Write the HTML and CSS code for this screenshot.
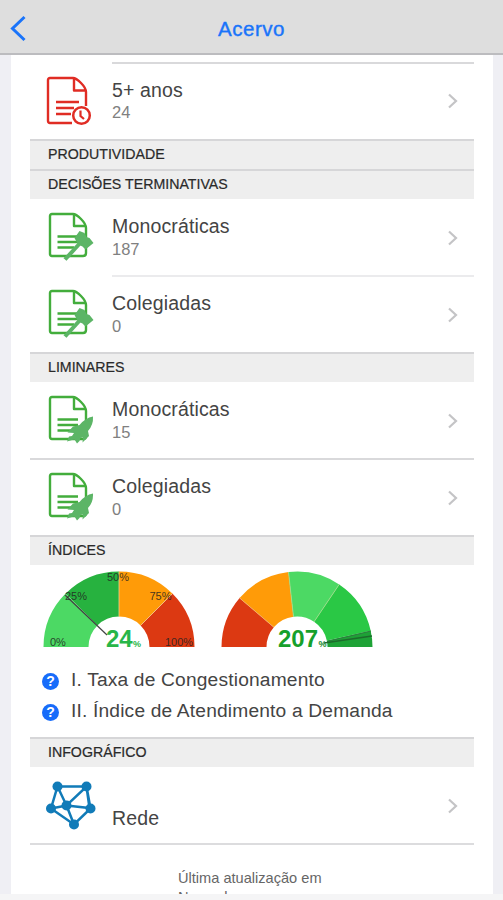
FILE: index.html
```html
<!DOCTYPE html>
<html lang="pt-BR">

<head>
  <meta charset="UTF-8">
  <title>Acervo</title>
  <link rel="stylesheet" href="styles.css">
</head>

<body>
  <!-- shared icon shapes -->
  <svg class="defs" width="0" height="0">
    <symbol id="doc" viewBox="0 0 48 50">
      <path d="M4 2H25Q28 2 33 7Q38 12 38 16V41Q38 44 35 44H4Q2 44 2 42V4Q2 2 4 2Z M26 3V14H37" fill="none" stroke="currentColor" stroke-width="2.400" stroke-linejoin="round" />
      <path d="M9.500 24.500H30M9.500 30H30M9.500 35.500H26" stroke="currentColor" stroke-width="2.400" />
    </symbol>
    <symbol id="gavel" viewBox="0 0 48 50">
      <use href="#doc" />
      <path d="M31.500 19L36.500 21L38.500 25L41.500 26L45.500 31L37.500 37.500L34.500 34.500L30 32.500L26.500 26Z" fill="#5cb566" />
      <path d="M34 29L17 47.500" stroke="#5cb566" stroke-width="4" />
    </symbol>
    <symbol id="rocket" viewBox="0 0 48 50">
      <use href="#doc" />
      <path d="M45 21.500Q37 23 31.500 30L25 31.500L19.500 37.500L26 38L24 41L21 41.500L19 46.500L24 45L26.500 44.500L29 48.500L31.500 46L32.500 43L35 42.500L34.500 47.500L41 41L40 36Q45.500 30 45 21.500Z" fill="#5cb566" />
    </symbol>
    <symbol id="chevron" viewBox="0 0 12 18">
      <path d="M2 2.500L9 9L2 15.500" fill="none" stroke="#c4c4c6" stroke-width="2.200" />
    </symbol>
  </svg>

  <header class="navbar">
    <svg class="back" width="18" height="28" viewBox="0 0 18 28">
      <path d="M14.500 3L2.500 14.500L14.500 26" fill="none" stroke="#1a74fa" stroke-width="3" />
    </svg>
    <h1>Acervo</h1>
  </header>

  <main class="card">
    <div class="list">
      <div class="line inset first"></div>
      <div class="row row-old">
        <svg class="icon icon-old" viewBox="0 0 46 50">
          <path d="M4 2H27Q30 2 35 7Q40 12 40 16V30M26 47H4Q2 47 2 45V4Q2 2 4 2M28 3V14.500H39" fill="none" stroke="#e02c24" stroke-width="2.400" stroke-linejoin="round" />
          <path d="M10 26H33M10 32H28M10 38H25" stroke="#e02c24" stroke-width="2.400" />
          <circle cx="35.500" cy="39.500" r="8.300" fill="#fff" stroke="#e02c24" stroke-width="2.500" />
          <path d="M34.500 34.500V40L38 43" fill="none" stroke="#e02c24" stroke-width="2.200" />
        </svg>
        <div class="text"><span class="title">5+ anos</span><span class="count">24</span></div>
        <svg class="chevron"><use href="#chevron" /></svg>
      </div>

      <h2>PRODUTIVIDADE</h2>
      <h2>DECISÕES TERMINATIVAS</h2>
      <div class="row">
        <svg class="icon"><use href="#gavel" /></svg>
        <div class="text"><span class="title">Monocráticas</span><span class="count">187</span></div>
        <svg class="chevron"><use href="#chevron" /></svg>
      </div>
      <div class="line inset light"></div>
      <div class="row">
        <svg class="icon"><use href="#gavel" /></svg>
        <div class="text"><span class="title">Colegiadas</span><span class="count">0</span></div>
        <svg class="chevron"><use href="#chevron" /></svg>
      </div>

      <h2>LIMINARES</h2>
      <div class="row">
        <svg class="icon"><use href="#rocket" /></svg>
        <div class="text"><span class="title">Monocráticas</span><span class="count">15</span></div>
        <svg class="chevron"><use href="#chevron" /></svg>
      </div>
      <div class="line"></div>
      <div class="row">
        <svg class="icon"><use href="#rocket" /></svg>
        <div class="text"><span class="title">Colegiadas</span><span class="count">0</span></div>
        <svg class="chevron"><use href="#chevron" /></svg>
      </div>

      <h2>ÍNDICES</h2>
      <div class="indices">
        <div class="gauges">
          <svg class="gauge" width="152" height="77" viewBox="0 0 152 77">
            <path d="M.5 76A75.500 75.500 0 0 1 22.600 22.600L54.400 54.400A30.500 30.500 0 0 0 45.500 76Z" fill="#4cd964" />
            <path d="M22.600 22.600A75.500 75.500 0 0 1 76 .5V45.500A30.500 30.500 0 0 0 54.400 54.400Z" fill="#27b23f" />
            <path d="M76 .5A75.500 75.500 0 0 1 129.400 22.600L97.600 54.400A30.500 30.500 0 0 0 76 45.500Z" fill="#ff9b08" />
            <path d="M129.400 22.600A75.500 75.500 0 0 1 151.500 76H106.500A30.500 30.500 0 0 0 97.600 54.400Z" fill="#dc3912" />
            <path d="M76 .5V45.500M129.400 22.600L97.600 54.400" stroke="#f3cf8f" stroke-width=".8" />
            <path d="M22 24L64 64" stroke="#444" stroke-width="1.200" />
            <g class="tick">
              <text x="7" y="75">0%</text>
              <text x="22" y="28.500">25%</text>
              <text x="64" y="9.500">50%</text>
              <text x="106.500" y="28.500">75%</text>
              <text x="122" y="75">100%</text>
            </g>
            <text class="value" x="63" y="75.500" fill="#28b648">24</text>
            <text class="unit" x="90" y="76" fill="#28b648">%</text>
          </svg>
          <svg class="gauge" width="152" height="77" viewBox="0 0 152 77">
            <path d="M.5 76A75.500 75.500 0 0 1 18.600 27L52.800 56.200A30.500 30.500 0 0 0 45.500 76Z" fill="#dc3912" />
            <path d="M18.600 27A75.500 75.500 0 0 1 67.500 1L72.500 45.700A30.500 30.500 0 0 0 52.800 56.200Z" fill="#ff9b08" />
            <path d="M67.500 1A75.500 75.500 0 0 1 118.200 13.400L93.100 50.700A30.500 30.500 0 0 0 72.500 45.700Z" fill="#4cd964" />
            <path d="M118.200 13.400A75.500 75.500 0 0 1 149.700 59.700L105.800 69.400A30.500 30.500 0 0 0 93.100 50.700Z" fill="#2ac845" />
            <path d="M149.700 59.700A75.500 75.500 0 0 1 151.500 76H106.500A30.500 30.500 0 0 0 105.800 69.400Z" fill="#1ea236" />
            <path d="M18.600 27L52.800 56.200" stroke="#f0b070" stroke-width=".8" />
            <path d="M67.500 1L72.500 45.700M118.200 13.400L93.100 50.700" stroke="#a6dc8c" stroke-width=".8" />
            <path d="M150 60L106 70.500" stroke="#2c7d3d" stroke-width="1" />
            <path d="M151 65L103 72" stroke="#1d6b2c" stroke-width="1.500" />
            <text class="value" x="57" y="75.500" fill="#16a02b">207</text>
            <text class="unit" x="97.500" y="76" fill="#168a28">%</text>
          </svg>
        </div>
        <div class="legend"><span class="help">?</span>I. Taxa de Congestionamento</div>
        <div class="legend legend-2"><span class="help">?</span>II. Índice de Atendimento a Demanda</div>
      </div>

      <h2>INFOGRÁFICO</h2>
      <div class="row row-net">
        <svg class="icon icon-net" viewBox="0 0 50 50" fill="#117bb8" stroke="#117bb8">
          <path d="M11.500 6.500H40.500L44.500 28.500L28 44.500L5 28.500L11.500 6.500L20.500 25.500L40.500 6.500L43.500 28L20.500 25.500L5 28.500M20.500 25.500L28 44.500" fill="none" stroke-width="2.500" />
          <g stroke="none">
            <circle cx="11.500" cy="6.500" r="5" />
            <circle cx="40.500" cy="6.500" r="5" />
            <circle cx="44.500" cy="28.500" r="5" />
            <circle cx="28" cy="44.500" r="5" />
            <circle cx="5" cy="28.500" r="5" />
            <circle cx="20.500" cy="25.500" r="5" />
          </g>
        </svg>
        <div class="text"><span class="title">Rede</span></div>
        <svg class="chevron"><use href="#chevron" /></svg>
      </div>
      <div class="line thin"></div>
      <p class="updated">Última atualização em<br>Novembro</p>
    </div>
  </main>
  <footer class="bottom"></footer>
</body>

</html>
```
FILE: styles.css
```css
* {
  box-sizing: border-box;
}

body {
  margin: 0;
  height: 900px;
  overflow: hidden;
  display: flex;
  flex-direction: column;
  background-color: #efeff4;
  font-family: "Liberation Sans", Arial, sans-serif;
  color: #444;
}

.defs {
  position: absolute;
}

.navbar {
  display: grid;
  grid-template-columns: 36px 1fr 36px;
  align-items: center;
  height: 55px;
  flex: none;
  padding-top: 3px;
  background-color: #dedede;
  border-bottom: 2px solid #bcbcbf;
}

.navbar h1 {
  margin: 0;
  padding-top: 1px;
  text-align: center;
  font-size: 20.5px;
  font-weight: normal;
  letter-spacing: 0.5px;
  color: #1a74fa;
  -webkit-text-stroke: 0.4px #1a74fa;
}

.back {
  margin-left: 10px;
}

.card {
  flex: 1;
  min-height: 0;
  overflow: hidden;
  margin: 0 10px 0 11px;
  padding: 7px 19px 0;
  background-color: #fff;
}

.line {
  height: 2px;
  margin-bottom: -1px;
  background-color: #d9d9db;
}

.inset {
  margin-left: 82px;
}

.first {
  margin-bottom: 0;
}

.light {
  background-color: #ebebed;
}

.thin {
  background-color: #dcdcde;
}

.row {
  display: flex;
  align-items: flex-start;
  height: 76px;
  padding: 13px 15px 0 18px;
}

.row-old {
  height: 75px;
  padding-left: 16px;
  padding-top: 12px;
}

.icon {
  width: 48px;
  height: 50px;
  color: #43ad3c;
  flex: none;
}

.icon-old {
  width: 46px;
}

.text {
  display: flex;
  flex-direction: column;
  flex: 1;
  margin-left: 16px;
}

.row-old .text {
  margin-left: 20px;
}

.title {
  font-size: 19.5px;
  line-height: 24px;
  letter-spacing: 0.15px;
  margin-top: 2px;
}

.count {
  font-size: 16.5px;
  line-height: 20px;
  margin-top: 1px;
  color: #808080;
}

.row-old .count {
  margin-top: 0;
}

.chevron {
  width: 12px;
  height: 18px;
  margin-top: 17px;
}

.row-old .chevron {
  margin-top: 16px;
}

h2 {
  margin: 0;
  height: 30px;
  padding-left: 18px;
  border-top: 2px solid #d6d6d8;
  background-color: #eee;
  font-size: 14.2px;
  line-height: 26px;
  font-weight: normal;
  color: #2a2a2a;
  -webkit-text-stroke: 0.2px #2a2a2a;
}

.indices {
  height: 172px;
  padding: 6px 0 0 13px;
}

.gauges {
  display: flex;
  gap: 25.5px;
  height: 76px;
}

.gauge {
  overflow: visible;
}

.tick {
  font-size: 11px;
  fill: #222;
  fill-opacity: 0.85;
}

.value {
  font-size: 24px;
  font-weight: bold;
}

.unit {
  font-size: 9px;
  font-weight: bold;
}

.legend {
  display: flex;
  align-items: center;
  height: 30px;
  margin-top: 18px;
  font-size: 19.2px;
  letter-spacing: 0.17px;
}

.legend-2 {
  margin-top: 1px;
}

.help {
  width: 17px;
  height: 17px;
  margin: 2px 12px 0 -1px;
  border-radius: 50%;
  background-color: #176cfa;
  color: #fff;
  font-size: 14px;
  line-height: 17px;
  font-weight: bold;
  text-align: center;
  letter-spacing: 0;
}

.icon-net {
  width: 50px;
}

.row-net {
  padding-left: 16px;
}

.row-net .title {
  margin-top: 26px;
}

.updated {
  margin: 25px 0 0 148px;
  font-size: 14.6px;
  line-height: 19px;
  color: #666;
}

.bottom {
  flex: none;
  height: 6px;
  background-color: #f5f5f6;
}
```
